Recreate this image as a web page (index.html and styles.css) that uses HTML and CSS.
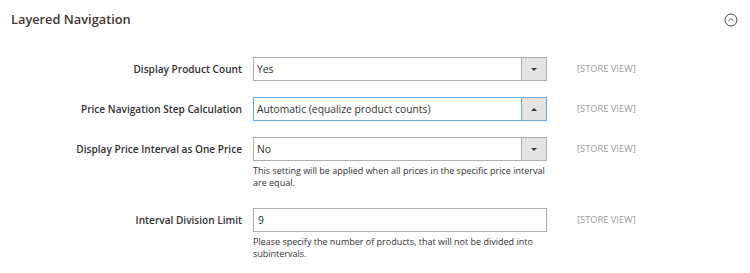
FILE: index.html
```html
<!DOCTYPE html>
<html lang="en">
<head>
    <meta charset="UTF-8">
    <title>Layered Navigation</title>
    <link rel="stylesheet" href="styles.css">
</head>
<body>
    <div class="section-head">
        <span class="section-title">Layered Navigation</span>
        <svg class="toggle" width="14" height="14" viewBox="0 0 14 14">
            <circle cx="7" cy="7" r="6" fill="none" stroke="#514943" stroke-width="1"/>
            <path d="M4.3 8.2 L7 5.5 L9.7 8.2" fill="none" stroke="#514943" stroke-width="1"/>
        </svg>
    </div>

    <div class="field">
        <label class="field-label">Display Product Count</label>
        <div class="control">
            <div class="select">
                <span class="select-value">Yes</span>
                <span class="select-arrow"><span class="tri down"></span></span>
            </div>
        </div>
        <span class="scope">[STORE VIEW]</span>
    </div>

    <div class="field">
        <label class="field-label">Price Navigation Step Calculation</label>
        <div class="control">
            <div class="select focused">
                <span class="select-value">Automatic (equalize product counts)</span>
                <span class="select-arrow"><span class="tri up"></span></span>
            </div>
        </div>
        <span class="scope">[STORE VIEW]</span>
    </div>

    <div class="field">
        <label class="field-label">Display Price Interval as One Price</label>
        <div class="control">
            <div class="select">
                <span class="select-value">No</span>
                <span class="select-arrow"><span class="tri down"></span></span>
            </div>
            <p class="note">This setting will be applied when all prices in the specific price interval are equal.</p>
        </div>
        <span class="scope">[STORE VIEW]</span>
    </div>

    <div class="field field-last">
        <label class="field-label">Interval Division Limit</label>
        <div class="control">
            <div class="input">9</div>
            <p class="note">Please specify the number of products, that will not be divided into subintervals.</p>
        </div>
        <span class="scope">[STORE VIEW]</span>
    </div>
</body>
</html>
```

FILE: styles.css
```css
body {
    font-family: 'Open Sans', sans-serif;
    background-color: #fff;
    color: #303030;
    margin: 0;
}

.section-head {
    display: flex;
    justify-content: space-between;
    align-items: center;
    height: 38px;
    padding: 0 12px 0 11px;
}

.section-title {
    font-size: 12.8px;
    font-weight: 600;
    color: #41362f;
}

.toggle {
    margin-top: 1px;
}

.field {
    display: flex;
    align-items: flex-start;
    margin-top: 19px;
}

.field + .field {
    margin-top: 16px;
}

.field + .field-last {
    margin-top: 19px;
}

.field-label {
    width: 242px;
    text-align: right;
    font-size: 10.1px;
    font-weight: 600;
    color: #303030;
    line-height: 24px;
    flex-shrink: 0;
}

.control {
    width: 294px;
    margin-left: 11px;
    flex-shrink: 0;
}

.select, .input {
    display: flex;
    height: 24px;
    box-sizing: border-box;
    border: 1px solid #adadad;
    background: #fff;
    font-size: 10.3px;
    color: #303030;
}

.input {
    align-items: center;
    padding-left: 4px;
}

.select-value {
    flex: 1;
    padding-left: 3px;
    line-height: 22px;
}

.select-arrow {
    width: 24px;
    border-left: 1px solid #adadad;
    background: #e3e3e3;
    display: flex;
    align-items: center;
    justify-content: center;
}

.focused {
    border-color: #68a8e0;
}

.focused .select-arrow {
    border-left-color: #68a8e0;
}

.tri {
    width: 0;
    height: 0;
    border-left: 3px solid transparent;
    border-right: 3px solid transparent;
}

.tri.down {
    border-top: 3px solid #41362f;
}

.tri.up {
    border-bottom: 3px solid #41362f;
}

.note {
    margin: 4px 0 0;
    font-size: 9px;
    line-height: 12px;
    color: #303030;
}

.scope {
    margin-left: 30px;
    font-size: 9.3px;
    color: #999;
    line-height: 24px;
}
```
